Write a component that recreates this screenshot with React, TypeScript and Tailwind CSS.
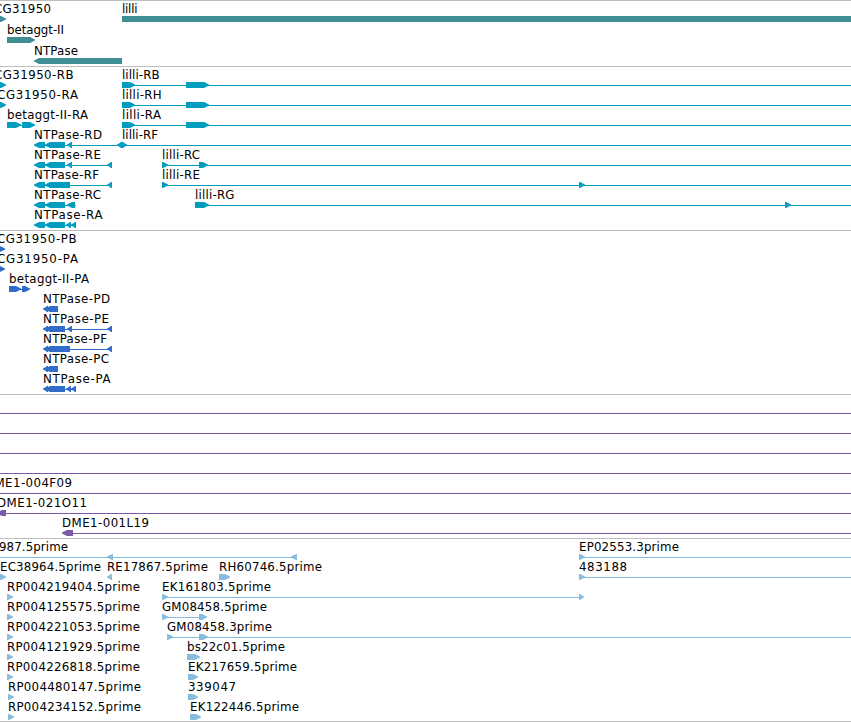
type Dir = 'l' | 'r' | 'b';

// [x, width, text]
type Label = [number, number, string];
// [start, end, strand], 'b' is a plain block
type Glyph = [number, number, Dir];
// [start, end]
type Line = [number, number];

interface Row {
  labels?: Label[];
  lines?: Line[];
  glyphs?: Glyph[];
}

interface TrackProps {
  rows: Row[];
  color: string;
  rowHeight?: number;
  className: string;
}

const END = 851;

const genes: Row[] = [
  {
    labels: [[-6, 57, 'CG31950'], [122, 15.5, 'lilli']],
    glyphs: [[-4, 6, 'r'], [122, END, 'b']],
  },
  { labels: [[7, 57, 'betaggt-II']], glyphs: [[7, 35, 'r']] },
  { labels: [[34, 44, 'NTPase']], glyphs: [[34, 122, 'l']] },
];

const transcripts: Row[] = [
  {
    labels: [[-6, 79.5, 'CG31950-RB'], [122, 37.5, 'lilli-RB']],
    lines: [[130, END]],
    glyphs: [[-4, 6, 'r'], [122, 135, 'r'], [186, 209, 'r']],
  },
  {
    labels: [[-3, 81, 'CG31950-RA'], [122, 39.5, 'lilli-RH']],
    lines: [[130, END]],
    glyphs: [[-4, 6, 'r'], [122, 135, 'r'], [186, 209, 'r']],
  },
  {
    labels: [[7, 81, 'betaggt-II-RA'], [122, 39, 'lilli-RA']],
    lines: [[18, 24], [130, END]],
    glyphs: [[7, 21, 'r'], [22, 35, 'r'], [122, 135, 'r'], [186, 209, 'r']],
  },
  {
    labels: [[34, 68, 'NTPase-RD'], [122, 36, 'lilli-RF']],
    lines: [[40, END]],
    glyphs: [[34, 45, 'l'], [45, 65, 'l'], [67, 72, 'l'], [117, 122, 'l'], [122, 127, 'r']],
  },
  {
    labels: [[34, 67, 'NTPase-RE'], [162, 38, 'lilli-RC']],
    lines: [[40, 110], [164, END]],
    glyphs: [[34, 45, 'l'], [45, 65, 'l'], [67, 72, 'l'], [107, 112, 'l'], [162, 168, 'r'], [199, 208, 'r']],
  },
  {
    labels: [[34, 65, 'NTPase-RF'], [162, 38, 'lilli-RE']],
    lines: [[40, 110], [164, END]],
    glyphs: [[34, 45, 'l'], [45, 70, 'l'], [107, 112, 'l'], [162, 168, 'r'], [579, 585, 'r']],
  },
  {
    labels: [[34, 67, 'NTPase-RC'], [195, 39.5, 'lilli-RG']],
    lines: [[40, 76], [200, END]],
    glyphs: [[34, 45, 'l'], [45, 65, 'l'], [67, 75, 'l'], [195, 209, 'r'], [785, 791, 'r']],
  },
  {
    labels: [[34, 68.5, 'NTPase-RA']],
    lines: [[40, 76]],
    glyphs: [[34, 45, 'l'], [45, 65, 'l'], [66, 71, 'l'], [71, 76, 'l']],
  },
];

const proteins: Row[] = [
  { labels: [[-3, 79.5, 'CG31950-PB']], glyphs: [[-4, 5, 'r']] },
  { labels: [[-3, 81, 'CG31950-PA']], glyphs: [[-4, 5, 'r']] },
  {
    labels: [[9, 80, 'betaggt-II-PA']],
    lines: [[18, 24]],
    glyphs: [[9, 21, 'r'], [22, 30, 'r']],
  },
  { labels: [[43, 67, 'NTPase-PD']], glyphs: [[43, 48, 'l'], [45, 58, 'l']] },
  {
    labels: [[43, 66, 'NTPase-PE']],
    lines: [[48, 110]],
    glyphs: [[43, 48, 'l'], [45, 65, 'l'], [67, 72, 'l'], [107, 112, 'l']],
  },
  {
    labels: [[43, 64, 'NTPase-PF']],
    lines: [[48, 110]],
    glyphs: [[43, 48, 'l'], [45, 70, 'l'], [107, 112, 'l']],
  },
  { labels: [[43, 66, 'NTPase-PC']], glyphs: [[43, 48, 'l'], [45, 58, 'l']] },
  {
    labels: [[43, 67.5, 'NTPase-PA']],
    lines: [[48, 76]],
    glyphs: [[43, 48, 'l'], [45, 65, 'l'], [66, 71, 'l'], [71, 76, 'l']],
  },
];

const bacs: Row[] = [
  { lines: [[0, END]] },
  { lines: [[0, END]] },
  { lines: [[0, END]] },
  { lines: [[0, END]] },
  { labels: [[-15, 87, 'DME1-004F09']], lines: [[0, END]] },
  { labels: [[-3, 90, 'DME1-021O11']], lines: [[4, END]], glyphs: [[-3, 6, 'l']] },
  { labels: [[62, 87, 'DME1-001L19']], lines: [[70, END]], glyphs: [[62, 73, 'l']] },
];

const ests: Row[] = [
  {
    labels: [[-1, 69, '987.5prime'], [579, 100, 'EP02553.3prime']],
    lines: [[0, 295], [581, END]],
    glyphs: [[107, 113, 'l'], [291, 297, 'l'], [579, 585, 'r']],
  },
  {
    labels: [
      [0, 101, 'EC38964.5prime'],
      [107, 101, 'RE17867.5prime'],
      [219, 103, 'RH60746.5prime'],
      [579, 48, '483188'],
    ],
    lines: [[581, END]],
    glyphs: [[-4, 6, 'r'], [107, 112, 'l'], [219, 230, 'r'], [579, 585, 'r']],
  },
  {
    labels: [[7, 133, 'RP004219404.5prime'], [162, 109, 'EK161803.5prime']],
    lines: [[164, 581]],
    glyphs: [[7, 13, 'r'], [162, 168, 'r'], [579, 584, 'r']],
  },
  {
    labels: [[7, 133, 'RP004125575.5prime'], [162, 105, 'GM08458.5prime']],
    lines: [[164, 204]],
    glyphs: [[7, 13, 'r'], [162, 168, 'r'], [199, 207, 'r']],
  },
  {
    labels: [[7, 133, 'RP004221053.5prime'], [167, 105, 'GM08458.3prime']],
    lines: [[169, END]],
    glyphs: [[7, 13, 'r'], [167, 173, 'r'], [199, 208, 'r']],
  },
  {
    labels: [[7, 133, 'RP004121929.5prime'], [187, 98, 'bs22c01.5prime']],
    glyphs: [[7, 13, 'r'], [187, 200, 'r']],
  },
  {
    labels: [[7, 133, 'RP004226818.5prime'], [188, 109, 'EK217659.5prime']],
    glyphs: [[7, 13, 'r'], [188, 198, 'r']],
  },
  {
    labels: [[8, 133, 'RP004480147.5prime'], [188, 48, '339047']],
    glyphs: [[8, 14, 'r'], [188, 198, 'r']],
  },
  {
    labels: [[8, 133, 'RP004234152.5prime'], [190, 109, 'EK122446.5prime']],
    glyphs: [[8, 14, 'r'], [190, 201, 'r']],
  },
];

const glyphPoints = ([start, end, dir]: Glyph) => {
  const head = Math.min(6, end - start);
  if (dir === 'r') {
    const neck = end - head;
    return `${start},15 ${neck + 1},15 ${end - 2},16.5 ${end},17.5 ${end},18.5 ${end - 2},19.5 ${neck + 1},21 ${start},21`;
  }
  if (dir === 'l') {
    const neck = start + head;
    return `${end},15 ${neck - 1},15 ${start + 2},16.5 ${start},17.5 ${start},18.5 ${start + 2},19.5 ${neck - 1},21 ${end},21`;
  }
  return `${start},15 ${end},15 ${end},21 ${start},21`;
};

const Track = ({ rows, color, rowHeight = 20, className }: TrackProps) => (
  <section className={`flex shrink-0 flex-col border-t border-[#bebebe] ${className}`}>
    {rows.map((row, i) => (
      <svg key={i} width={END} height={rowHeight} className="block shrink-0 overflow-visible">
        {row.lines?.map(([start, end]) => (
          <rect key={start} x={start} y={18} width={end - start} height={1} fill={color} />
        ))}
        {row.glyphs?.map((glyph) => (
          <polygon key={glyph[0]} points={glyphPoints(glyph)} fill={color} />
        ))}
        {row.labels?.map(([x, width, text]) => (
          <text key={text} x={x} y={12} textLength={width} fill="#000">
            {text}
          </text>
        ))}
      </svg>
    ))}
  </section>
);

const App = () => {
  return (
    <main className="flex h-[722px] w-[851px] flex-col overflow-hidden bg-white font-['DejaVu_Sans',sans-serif] text-[11.8px]">
      <Track rows={genes} color="#3f8e94" rowHeight={21} className="h-[66px]" />
      <Track rows={transcripts} color="#009dbf" className="h-[164px]" />
      <Track rows={proteins} color="#326ccb" className="h-[164px]" />
      <Track rows={bacs} color="#7a5aa8" className="h-[144px]" />
      <Track rows={ests} color="#88bcde" className="h-[184px] border-b" />
    </main>
  );
};

export default App;
